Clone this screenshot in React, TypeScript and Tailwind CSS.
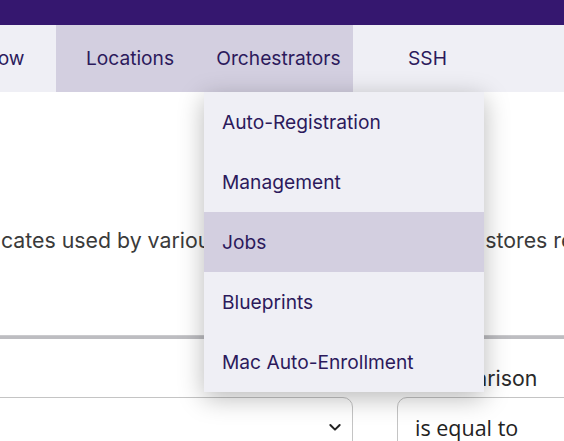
import React from "react";

const font = { fontFamily: "Inter, 'Open Sans', sans-serif" };

export default function App() {
  const items = ["Auto-Registration", "Management", "Jobs", "Blueprints", "Mac Auto-Enrollment"];
  return (
    <div className="relative w-[564px] h-[441px] overflow-hidden bg-white" style={font}>
      <div className="h-[25px] bg-[#35176f]" />
      <div className="flex h-[67px] bg-[#efeff5] text-[19.2px] text-[#2c1a5c]">
        <div className="-ml-[93px] w-[149px] shrink-0 flex items-center justify-center">Workflow</div>
        <div className="w-[148px] shrink-0 flex items-center justify-center bg-[#d3cfe0]">Locations</div>
        <div className="w-[149px] shrink-0 flex items-center justify-center bg-[#d3cfe0]">Orchestrators</div>
        <div className="w-[149px] shrink-0 flex items-center justify-center">SSH</div>
      </div>
      <div className="pt-[134px] pl-[1px] whitespace-nowrap text-[21.3px] leading-[28px] text-[#3a3a3a]">
        cates used by various orchestrators. Certificate stores represent
      </div>
      <div className="mt-[81px] h-[4px] bg-[#bdbdc1] border-t border-[#cacacd]" />
      <div className="flex mt-[25px]">
        <div className="w-[353px] shrink-0" />
        <div className="pl-[62px] text-[21.3px] leading-[28px] text-[#2a2a2a]">Comparison</div>
      </div>
      <div className="flex gap-[44px] mt-[5px]">
        <div className="-ml-[20px] w-[373px] h-[60px] shrink-0 border border-[#c4c4c4] rounded-tr-[10px] flex items-center justify-end pr-[9px]">
          <svg width="16" height="16" viewBox="0 0 24 24" fill="none" stroke="#222" strokeWidth="3" strokeLinecap="round" strokeLinejoin="round">
            <path d="M5 9l7 7 7-7" />
          </svg>
        </div>
        <div className="w-[200px] h-[60px] shrink-0 border border-[#c4c4c4] rounded-tl-[10px] pl-[17px] pt-[14px] text-[21.5px] text-[#222]" style={{ fontFamily: "'Open Sans', sans-serif" }}>
          is equal to
        </div>
      </div>
      <div className="absolute left-[204px] top-[92px] w-[280px] bg-[#efeff5] shadow-[0_6px_24px_rgba(0,0,0,0.28)] text-[19.2px] text-[#2c1a5c]">
        {items.map((it) => (
          <div key={it} className={`h-[60px] flex items-center pl-[18px] ${it === "Jobs" ? "bg-[#d3cfe0]" : ""}`}>
            {it}
          </div>
        ))}
      </div>
    </div>
  );
}
